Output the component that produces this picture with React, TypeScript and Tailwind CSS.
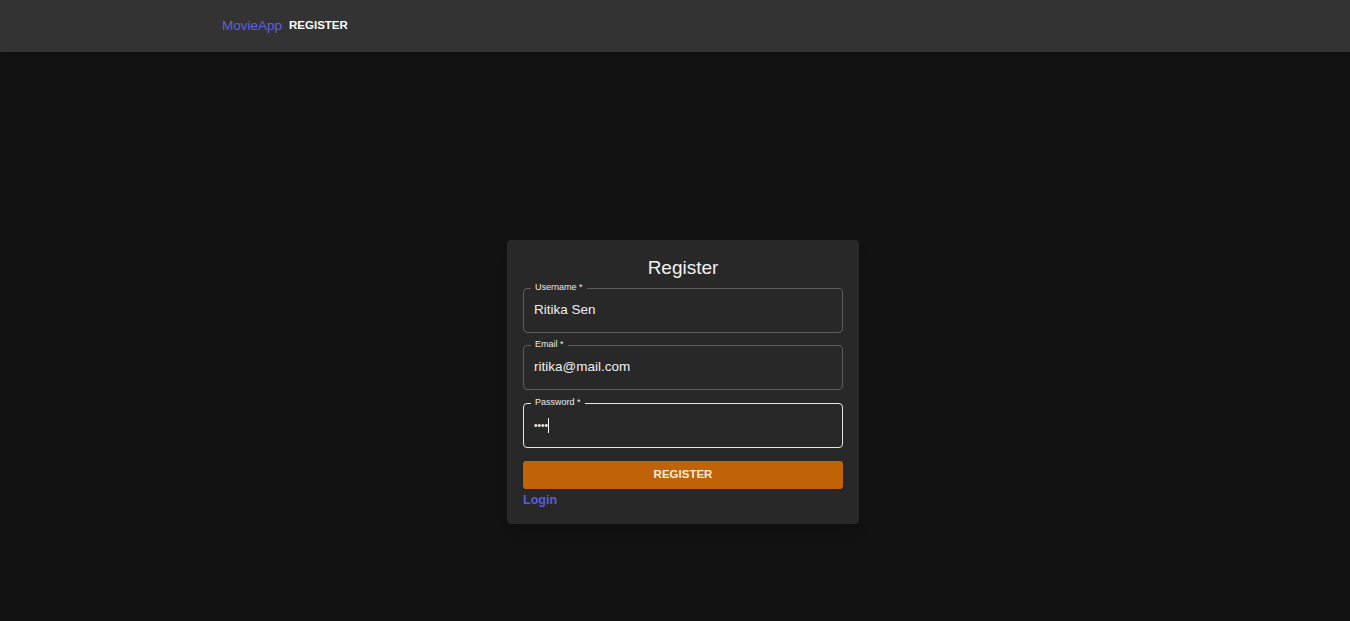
const font = { fontFamily: '"Liberation Sans", Arial, sans-serif' };

function Field({ label, value, focused, password }: { label: string; value: string; focused?: boolean; password?: boolean }) {
  return (
    <div
      className={`relative h-[45px] rounded-[4px] border ${focused ? "border-[#e6e6e6]" : "border-[#5c5c5c]"} flex items-center px-[10px]`}
    >
      <span className="absolute -top-[7px] left-[7px] bg-[#282828] px-[4px] text-[9px] leading-[11px] text-[#e8e8e8]">
        {label} *
      </span>
      {password ? (
        <div className="flex items-center">
          <span className="text-[10px] leading-[10px] text-[#f0f0f0]">{value}</span>
          <span className="h-[15px] w-[1px] bg-white" />
        </div>
      ) : (
        <span className="text-[13.5px] text-[#f0f0f0]">{value}</span>
      )}
    </div>
  );
}

export default function App() {
  return (
    <div className="min-h-[621px] bg-[#121212]" style={font}>
      <header className="h-[52px] bg-[#333333] shadow-md flex items-start pl-[222px] pt-[17px]">
        <span className="text-[13.5px] leading-[18px] text-[#5f5fe0]">MovieApp</span>
        <span className="ml-[7px] text-[11.5px] leading-[16px] font-bold text-white">REGISTER</span>
      </header>

      <main className="flex justify-center pl-[16px] pt-[188px]">
        <div className="w-[352px] rounded-[4px] bg-[#282828] px-4 pt-[15px] pb-[16px] shadow-lg">
          <h1 className="text-center text-[19px] leading-[25px] text-[#f2f2f2]">Register</h1>
          <div className="mt-[8px] flex flex-col">
            <Field label="Username" value="Ritika Sen" />
            <div className="mt-[12px]">
              <Field label="Email" value="ritika@mail.com" />
            </div>
            <div className="mt-[13px]">
              <Field label="Password" value="••••" focused password />
            </div>
          </div>
          <button className="mt-[13px] h-[28px] w-full rounded-[3px] bg-[#bf6306] text-[11.5px] font-bold text-[#f7ebdd] shadow">
            REGISTER
          </button>
          <a className="mt-[3px] block text-[12.5px] font-bold leading-[16px] text-[#5a5ae0]">Login</a>
        </div>
      </main>
    </div>
  );
}
